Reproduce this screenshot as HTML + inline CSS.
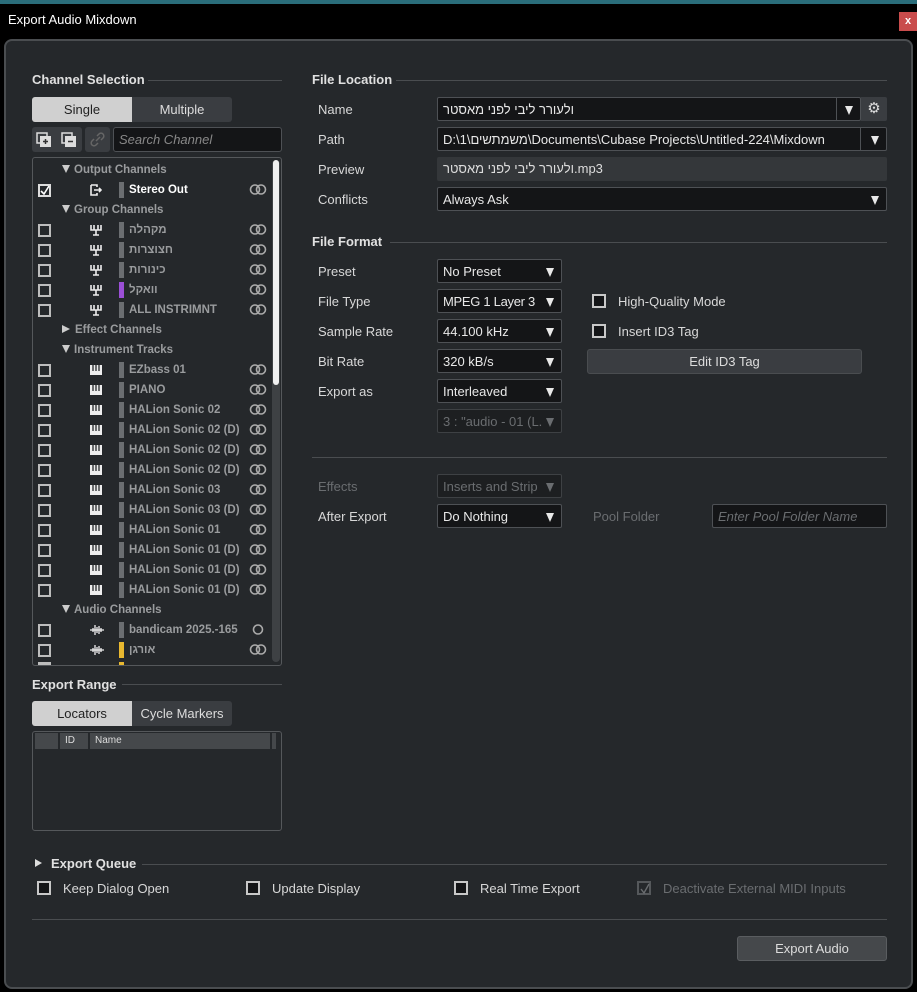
<!DOCTYPE html>
<html><head><meta charset="utf-8"><style>
*{box-sizing:border-box;margin:0;padding:0}
body{width:917px;height:992px;background:#000;font-family:"Liberation Sans","Noto Sans CJK JP",sans-serif;font-size:13px;color:#d8d8d8;position:relative;overflow:hidden}
.a{position:absolute;white-space:nowrap}
.panel{position:absolute;left:4px;top:39px;width:909px;height:950px;background:#25282b;border:2px solid #4a4d50;border-radius:8px}
.hd{font-weight:bold;color:#e0e0e0;font-size:13px}
.line{position:absolute;height:1px;background:#4a4d50}
.sel{position:absolute;background:#141517;border:1px solid #4e5155;border-radius:2px;height:24px;padding:4px 5px;color:#e8e8e8;white-space:nowrap;overflow:hidden}
.sel.dis{color:#6a6d70;border-color:#3e4144;background:#1d1f21}
.arr{position:absolute;right:7px;top:8px;width:0;height:0;border-left:4.5px solid transparent;border-right:4.5px solid transparent;border-top:9px solid #e8e8e8}
.dis .arr{border-top-color:#6a6d70}
.cb{position:absolute;width:14px;height:14px;border:2px solid #c8c8c8;background:#141517}
.row{position:absolute;left:33px;width:238px;height:20px}
.row .c{position:absolute;left:5px;top:4px;width:13px;height:13px;border:2px solid #bdbdbd}
.row .bar{position:absolute;left:86px;top:2px;width:5px;height:16px;background:#6b6e71}
.row .t{position:absolute;left:96px;top:4px;color:#9a9c9e;font-weight:bold;font-size:11.5px}
.row .ic{position:absolute;left:57px;top:4px}
.row .ln{position:absolute;right:4px;top:4px;width:18px;height:11px}
.grp{position:absolute;left:62px;color:#9a9c9e;font-weight:bold;font-size:11.5px}
.tri{display:inline-block;width:0;height:0;border-left:4.5px solid transparent;border-right:4.5px solid transparent;border-top:8px solid #ccc;margin-right:4px;vertical-align:0}
.trr{display:inline-block;width:0;height:0;border-top:4.5px solid transparent;border-bottom:4.5px solid transparent;border-left:8px solid #ccc;margin-right:5px;vertical-align:0}
</style></head><body>
<svg width="0" height="0" style="position:absolute"><defs>
<symbol id="L" viewBox="0 0 18 11"><circle cx="6" cy="5.5" r="4.5" fill="none" stroke="#aaa" stroke-width="1.6"/><circle cx="12" cy="5.5" r="4.5" fill="none" stroke="#aaa" stroke-width="1.6"/></symbol>
<symbol id="G" viewBox="0 0 12 12"><path d="M1 1v5h10V1M4 1v5M8 1v5M6 6v5M3 11h6" stroke="#eee" stroke-width="1.6" fill="none"/></symbol>
<symbol id="P" viewBox="0 0 12 12"><rect x="0" y="1" width="12" height="10" fill="#eee"/><path d="M3 1v6M6 1v6M9 1v6" stroke="#25282b" stroke-width="1.3"/></symbol>
<symbol id="W" viewBox="0 0 14 12"><path d="M0 6h14M3 4v4M5 1v10M7 3v6M9 2v8M11 4v4" stroke="#eee" stroke-width="1.3"/></symbol>
</defs></svg>
<div class="a" style="left:0;top:0;width:917px;height:4px;background:#2a6d7a"></div>
<div class="a" style="left:8px;top:12px;color:#fff;font-size:13px">Export Audio Mixdown</div>
<div class="a" style="left:899px;top:12px;width:18px;height:19px;background:#c94c4c;color:#fff;font-size:11px;text-align:center;line-height:18px;font-weight:bold">x</div>
<div class="panel"></div>

<div class="a hd" style="left:32px;top:72px">Channel Selection</div>
<div class="line" style="left:148px;top:80px;width:134px"></div>
<div class="a" style="left:32px;top:97px;width:200px;height:25px;background:#3a3d41;border-radius:3px"></div>
<div class="a" style="left:32px;top:97px;width:100px;height:25px;background:#d0d0d0;border-radius:3px 0 0 3px;color:#222;text-align:center;line-height:25px">Single</div>
<div class="a" style="left:132px;top:97px;width:100px;height:25px;color:#ddd;text-align:center;line-height:25px">Multiple</div>
<div class="a" style="left:32px;top:127px;width:50px;height:25px;background:#3a3d41;border-radius:3px"></div>
<svg class="a" style="left:36px;top:131px" width="44" height="18"><rect x="1" y="2" width="10" height="10" fill="none" stroke="#ddd" stroke-width="1.5"/><rect x="4" y="5" width="11" height="11" fill="#ddd"/><path d="M7 10.5h5M9.5 8v5" stroke="#333" stroke-width="1.5"/><rect x="26" y="2" width="10" height="10" fill="none" stroke="#ddd" stroke-width="1.5"/><rect x="29" y="5" width="11" height="11" fill="#ddd"/><path d="M32 10.5h5" stroke="#333" stroke-width="1.5"/></svg>
<div class="a" style="left:85px;top:127px;width:25px;height:25px;background:#3a3d41;border-radius:3px"></div>
<svg class="a" style="left:89px;top:131px" width="17" height="17"><path d="M7 10l4-4M5 8l-2 2a2.5 2.5 0 0 0 4 4l2-2M12 9l2-2a2.5 2.5 0 0 0-4-4l-2 2" stroke="#666" stroke-width="1.5" fill="none"/></svg>
<div class="a" style="left:113px;top:127px;width:169px;height:25px;background:#141517;border:1px solid #4e5155;border-radius:3px;padding:4px 5px;color:#888;font-style:italic">Search Channel</div>

<div class="a" style="left:32px;top:157px;width:250px;height:509px;border:1px solid #55585b;border-radius:3px;background:#25282b"></div>
<div class="a" style="left:272px;top:160px;width:8px;height:502px;background:#3e4144;border-radius:4px"></div>
<div class="a" style="left:273px;top:160px;width:6px;height:225px;background:#f0f0f0;border-radius:3px"></div>

<div class="grp" style="top:164px"><span class="tri"></span>Output Channels</div>
<div class="row" style="top:180px"><div class="c" style="border-color:#ddd"></div><svg class="a" style="left:7px;top:6px" width="10" height="10"><path d="M1 5l3 3 5-8" stroke="#fff" stroke-width="1.6" fill="none"/></svg><svg class="ic" width="12" height="12"><path d="M1 1h6v2M1 1v10h6V9M4 6h7M9 4l2 2-2 2" stroke="#eee" stroke-width="1.6" fill="none"/></svg><div class="bar"></div><div class="t" style="color:#fff">Stereo Out</div><svg class="ln"><use href="#L"/></svg></div>
<div class="grp" style="top:204px"><span class="tri"></span>Group Channels</div>
<div class="row" style="top:220px"><div class="c"></div><svg class="ic" width="12" height="12"><use href="#G"/></svg><div class="bar"></div><div class="t">מקהלה</div><svg class="ln"><use href="#L"/></svg></div>
<div class="row" style="top:240px"><div class="c"></div><svg class="ic" width="12" height="12"><use href="#G"/></svg><div class="bar"></div><div class="t">חצוצרות</div><svg class="ln"><use href="#L"/></svg></div>
<div class="row" style="top:260px"><div class="c"></div><svg class="ic" width="12" height="12"><use href="#G"/></svg><div class="bar"></div><div class="t">כינורות</div><svg class="ln"><use href="#L"/></svg></div>
<div class="row" style="top:280px"><div class="c"></div><svg class="ic" width="12" height="12"><use href="#G"/></svg><div class="bar" style="background:#9b4fd6"></div><div class="t">וואקל</div><svg class="ln"><use href="#L"/></svg></div>
<div class="row" style="top:300px"><div class="c"></div><svg class="ic" width="12" height="12"><use href="#G"/></svg><div class="bar"></div><div class="t">ALL INSTRIMNT</div><svg class="ln"><use href="#L"/></svg></div>
<div class="grp" style="top:324px"><span class="trr"></span>Effect Channels</div>
<div class="grp" style="top:344px"><span class="tri"></span>Instrument Tracks</div>
<div class="row" style="top:360px"><div class="c"></div><svg class="ic" width="12" height="12"><use href="#P"/></svg><div class="bar"></div><div class="t">EZbass 01</div><svg class="ln"><use href="#L"/></svg></div>
<div class="row" style="top:380px"><div class="c"></div><svg class="ic" width="12" height="12"><use href="#P"/></svg><div class="bar"></div><div class="t">PIANO</div><svg class="ln"><use href="#L"/></svg></div>
<div class="row" style="top:400px"><div class="c"></div><svg class="ic" width="12" height="12"><use href="#P"/></svg><div class="bar"></div><div class="t">HALion Sonic 02</div><svg class="ln"><use href="#L"/></svg></div>
<div class="row" style="top:420px"><div class="c"></div><svg class="ic" width="12" height="12"><use href="#P"/></svg><div class="bar"></div><div class="t">HALion Sonic 02 (D)</div><svg class="ln"><use href="#L"/></svg></div>
<div class="row" style="top:440px"><div class="c"></div><svg class="ic" width="12" height="12"><use href="#P"/></svg><div class="bar"></div><div class="t">HALion Sonic 02 (D)</div><svg class="ln"><use href="#L"/></svg></div>
<div class="row" style="top:460px"><div class="c"></div><svg class="ic" width="12" height="12"><use href="#P"/></svg><div class="bar"></div><div class="t">HALion Sonic 02 (D)</div><svg class="ln"><use href="#L"/></svg></div>
<div class="row" style="top:480px"><div class="c"></div><svg class="ic" width="12" height="12"><use href="#P"/></svg><div class="bar"></div><div class="t">HALion Sonic 03</div><svg class="ln"><use href="#L"/></svg></div>
<div class="row" style="top:500px"><div class="c"></div><svg class="ic" width="12" height="12"><use href="#P"/></svg><div class="bar"></div><div class="t">HALion Sonic 03 (D)</div><svg class="ln"><use href="#L"/></svg></div>
<div class="row" style="top:520px"><div class="c"></div><svg class="ic" width="12" height="12"><use href="#P"/></svg><div class="bar"></div><div class="t">HALion Sonic 01</div><svg class="ln"><use href="#L"/></svg></div>
<div class="row" style="top:540px"><div class="c"></div><svg class="ic" width="12" height="12"><use href="#P"/></svg><div class="bar"></div><div class="t">HALion Sonic 01 (D)</div><svg class="ln"><use href="#L"/></svg></div>
<div class="row" style="top:560px"><div class="c"></div><svg class="ic" width="12" height="12"><use href="#P"/></svg><div class="bar"></div><div class="t">HALion Sonic 01 (D)</div><svg class="ln"><use href="#L"/></svg></div>
<div class="row" style="top:580px"><div class="c"></div><svg class="ic" width="12" height="12"><use href="#P"/></svg><div class="bar"></div><div class="t">HALion Sonic 01 (D)</div><svg class="ln"><use href="#L"/></svg></div>
<div class="grp" style="top:604px"><span class="tri"></span>Audio Channels</div>
<div class="row" style="top:620px"><div class="c"></div><svg class="ic" width="14" height="12"><use href="#W"/></svg><div class="bar"></div><div class="t">bandicam 2025.-165</div><svg class="ln" viewBox="0 0 18 11"><circle cx="9" cy="5.5" r="4.5" fill="none" stroke="#aaa" stroke-width="1.6"/></svg></div>
<div class="row" style="top:640px"><div class="c"></div><svg class="ic" width="14" height="12"><use href="#W"/></svg><div class="bar" style="background:#e8b830"></div><div class="t">אורגן</div><svg class="ln"><use href="#L"/></svg></div>
<div class="a" style="left:38px;top:662px;width:13px;height:3px;background:#bdbdbd"></div>
<div class="a" style="left:119px;top:662px;width:5px;height:3px;background:#e8b830"></div>

<div class="a hd" style="left:32px;top:677px">Export Range</div>
<div class="line" style="left:122px;top:684px;width:160px"></div>
<div class="a" style="left:32px;top:701px;width:200px;height:25px;background:#3a3d41;border-radius:3px"></div>
<div class="a" style="left:32px;top:701px;width:100px;height:25px;background:#d0d0d0;border-radius:3px 0 0 3px;color:#222;text-align:center;line-height:25px">Locators</div>
<div class="a" style="left:132px;top:701px;width:100px;height:25px;color:#ddd;text-align:center;line-height:25px">Cycle Markers</div>
<div class="a" style="left:32px;top:731px;width:250px;height:100px;border:1px solid #55585b;border-radius:3px"></div>
<div class="a" style="left:35px;top:733px;width:235px;height:16px;background:#45484b"></div>
<div class="a" style="left:58px;top:733px;width:2px;height:16px;background:#25282b"></div>
<div class="a" style="left:88px;top:733px;width:2px;height:16px;background:#25282b"></div>
<div class="a" style="left:272px;top:733px;width:4px;height:16px;background:#45484b"></div>
<div class="a" style="left:65px;top:735px;font-size:10px;color:#ddd">ID</div>
<div class="a" style="left:95px;top:735px;font-size:10px;color:#ddd">Name</div>

<div class="a hd" style="left:312px;top:72px">File Location</div>
<div class="line" style="left:396px;top:80px;width:491px"></div>
<div class="a" style="left:318px;top:102px">Name</div>
<div class="a" style="left:318px;top:132px">Path</div>
<div class="a" style="left:318px;top:162px">Preview</div>
<div class="a" style="left:318px;top:192px">Conflicts</div>
<div class="sel" style="left:437px;top:97px;width:424px">ולעורר ליבי לפני מאסטר<div style="position:absolute;left:398px;top:0;width:1px;height:24px;background:#4e5155"></div><span class="arr"></span></div>
<div class="a" style="left:861px;top:97px;width:26px;height:24px;background:#3a3d41;border-radius:0 2px 2px 0;color:#ddd;text-align:center;line-height:24px;font-size:15px">⚙</div>
<div class="sel" style="left:437px;top:127px;width:450px">D:\1\משמתשים\Documents\Cubase Projects\Untitled-224\Mixdown<div style="position:absolute;left:422px;top:0;width:1px;height:24px;background:#4e5155"></div><span class="arr"></span></div>
<div class="a" style="left:437px;top:157px;width:450px;height:24px;background:#34373a;border-radius:2px;padding:4px 6px;color:#ddd">ולעורר ליבי לפני מאסטר.mp3</div>
<div class="sel" style="left:437px;top:187px;width:450px">Always Ask<span class="arr"></span></div>

<div class="a hd" style="left:312px;top:234px">File Format</div>
<div class="line" style="left:390px;top:242px;width:497px"></div>
<div class="a" style="left:318px;top:264px">Preset</div>
<div class="a" style="left:318px;top:294px">File Type</div>
<div class="a" style="left:318px;top:324px">Sample Rate</div>
<div class="a" style="left:318px;top:354px">Bit Rate</div>
<div class="a" style="left:318px;top:384px">Export as</div>
<div class="sel" style="left:437px;top:259px;width:125px">No Preset<span class="arr"></span></div>
<div class="sel" style="left:437px;top:289px;width:125px;letter-spacing:-0.3px">MPEG 1 Layer 3<span class="arr"></span></div>
<div class="sel" style="left:437px;top:319px;width:125px">44.100 kHz<span class="arr"></span></div>
<div class="sel" style="left:437px;top:349px;width:125px">320 kB/s<span class="arr"></span></div>
<div class="sel" style="left:437px;top:379px;width:125px">Interleaved<span class="arr"></span></div>
<div class="sel dis" style="left:437px;top:409px;width:125px">3 : "audio - 01 (L.<span class="arr"></span></div>
<div class="cb" style="left:592px;top:294px"></div>
<div class="a" style="left:618px;top:294px">High-Quality Mode</div>
<div class="cb" style="left:592px;top:324px"></div>
<div class="a" style="left:618px;top:324px">Insert ID3 Tag</div>
<div class="a" style="left:587px;top:349px;width:275px;height:25px;background:#3a3d41;border:1px solid #4a4d50;border-radius:3px;text-align:center;line-height:23px;color:#ddd">Edit ID3 Tag</div>
<div class="line" style="left:312px;top:457px;width:575px"></div>
<div class="a" style="left:318px;top:479px;color:#6a6d70">Effects</div>
<div class="sel dis" style="left:437px;top:474px;width:125px">Inserts and Strip<span class="arr"></span></div>
<div class="a" style="left:318px;top:509px">After Export</div>
<div class="sel" style="left:437px;top:504px;width:125px">Do Nothing<span class="arr"></span></div>
<div class="a" style="left:593px;top:509px;color:#6a6d70">Pool Folder</div>
<div class="sel" style="left:712px;top:504px;width:175px;color:#6a6d70;font-style:italic">Enter Pool Folder Name</div>

<div class="a" style="left:35px;top:859px;width:0;height:0;border-top:4.5px solid transparent;border-bottom:4.5px solid transparent;border-left:7px solid #ddd"></div>
<div class="a hd" style="left:51px;top:856px">Export Queue</div>
<div class="line" style="left:142px;top:864px;width:745px"></div>
<div class="cb" style="left:37px;top:881px"></div>
<div class="a" style="left:63px;top:881px">Keep Dialog Open</div>
<div class="cb" style="left:246px;top:881px"></div>
<div class="a" style="left:272px;top:881px">Update Display</div>
<div class="cb" style="left:454px;top:881px"></div>
<div class="a" style="left:480px;top:881px">Real Time Export</div>
<div class="cb" style="left:637px;top:881px;border-color:#55585b;background:#25282b"></div>
<svg class="a" style="left:640px;top:883px" width="10" height="12"><path d="M1 6l3 4 5-9" stroke="#6a6d70" stroke-width="1.4" fill="none"/></svg>
<div class="a" style="left:663px;top:881px;color:#6a6d70">Deactivate External MIDI Inputs</div>
<div class="line" style="left:32px;top:919px;width:855px"></div>
<div class="a" style="left:737px;top:936px;width:150px;height:25px;background:#45484b;border:1px solid #5a5d60;border-radius:3px;text-align:center;line-height:23px;color:#ddd">Export Audio</div>
</body></html>
